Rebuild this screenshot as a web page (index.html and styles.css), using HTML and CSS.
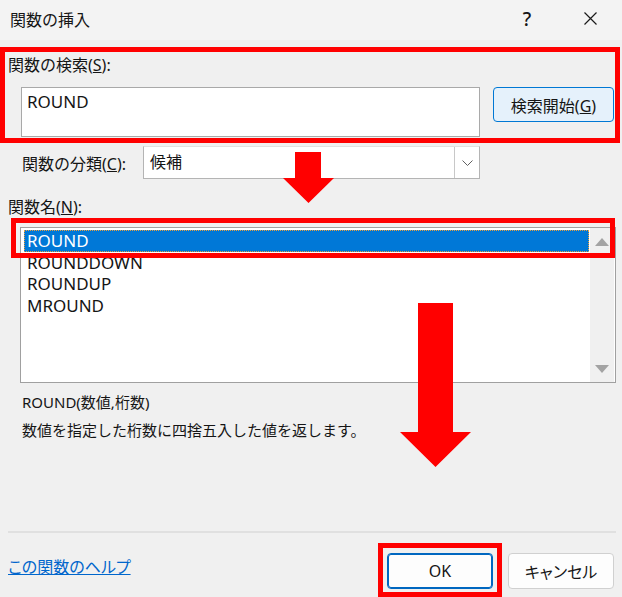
FILE: index.html
```html
<!DOCTYPE html>
<html lang="ja">

<head>
    <meta charset="UTF-8">
    <meta name="viewport" content="width=device-width, initial-scale=1.0">
    <title>関数の挿入</title>
    <link rel="stylesheet" href="styles.css">
</head>

<body>
    <div class="dialog">
        <div class="titlebar">
            <span class="title">関数の挿入</span>
            <span class="help">?</span>
            <span class="close">
                <svg width="13" height="13" viewBox="0 0 13 13">
                    <path d="M0.5 0.5 L12.5 12.5 M12.5 0.5 L0.5 12.5" stroke="#1a1a1a" stroke-width="1.2" fill="none" />
                </svg>
            </span>
        </div>

        <div class="content">
            <div class="search-label">関数の検索(<u>S</u>):</div>
            <div class="search-row">
                <div class="search-box">ROUND</div>
                <button class="btn btn-search">検索開始(<u>G</u>)</button>
            </div>

            <div class="category-row">
                <span class="category-label">関数の分類(<u>C</u>):</span>
                <div class="select">
                    <span class="select-value">候補</span>
                    <span class="select-arrow">
                        <svg width="11" height="6" viewBox="0 0 11 6">
                            <path d="M0.5 0.5 L5.5 5.5 L10.5 0.5" stroke="#606060" stroke-width="1" fill="none" />
                        </svg>
                    </span>
                </div>
            </div>

            <div class="name-label">関数名(<u>N</u>):</div>
            <div class="listbox">
                <ul class="items">
                    <li class="selected">ROUND</li>
                    <li>ROUNDDOWN</li>
                    <li>ROUNDUP</li>
                    <li>MROUND</li>
                </ul>
                <div class="scrollbar">
                    <span class="arrow-up"></span>
                    <span class="arrow-down"></span>
                </div>
            </div>

            <div class="desc">
                <div>ROUND(数値,桁数)</div>
                <div>数値を指定した桁数に四捨五入した値を返します。</div>
            </div>
        </div>

        <div class="separator"></div>
        <div class="footer">
            <a href="#" class="help-link">この関数のヘルプ</a>
            <div class="buttons">
                <button class="btn btn-ok">OK</button>
                <button class="btn btn-cancel">キャンセル</button>
            </div>
        </div>

        <!-- red annotations drawn over the dialog -->
        <span class="mark mark-search"></span>
        <span class="mark mark-row"></span>
        <span class="mark mark-ok"></span>
        <svg class="arrow arrow-small" width="51" height="51" viewBox="0 0 51 51">
            <polygon points="12,0 38,0 38,26 51,26 25.5,51 0,26 12,26" fill="#ff0000" />
        </svg>
        <svg class="arrow arrow-big" width="71" height="164" viewBox="0 0 71 164">
            <polygon points="18,0 53,0 53,129 71,129 35.5,164 0,129 18,129" fill="#ff0000" />
        </svg>
    </div>
</body>

</html>
```

FILE: styles.css
```css
* {
    box-sizing: border-box;
}

body {
    margin: 0;
    background: #f0f0f0;
    font-family: "Noto Sans", "Noto Sans CJK JP", sans-serif;
    color: #151515;
}

.dialog {
    position: relative;
    width: 622px;
    height: 597px;
    overflow: hidden;
    background: #f0f0f0;
    display: flex;
    flex-direction: column;
}

.titlebar {
    height: 40px;
    display: flex;
    align-items: center;
    padding: 0 0 3px 10px;
    background: #f3f3f3;
    font-size: 16px;
}

.titlebar .help {
    margin-left: auto;
    width: 20px;
    text-align: center;
    font-size: 19px;
    font-weight: 500;
}

.titlebar .close {
    display: flex;
    margin-left: 47px;
    margin-right: 25px;
}

.content {
    flex: 1;
    padding-top: 15px;
    font-size: 16px;
}

.search-label {
    padding-left: 8px;
    line-height: 20px;
}

.search-row {
    display: flex;
    align-items: flex-start;
    margin-top: 12px;
    padding-left: 21px;
}

.search-box {
    width: 459px;
    height: 50px;
    padding: 4px 5px;
    background: #fff;
    border: 1px solid #a9a9a9;
    font-size: 17px;
    line-height: 20px;
}

.btn {
    font-family: inherit;
    font-size: 16px;
    color: #151515;
    border-radius: 4px;
    padding: 0;
    cursor: pointer;
}

.btn-search {
    margin-left: 13px;
    width: 121px;
    height: 35px;
    background: #e5f1fb;
    border: 1px solid #0078d4;
}

.category-row {
    display: flex;
    align-items: center;
    margin-top: 9px;
    padding-left: 22px;
}

.category-label {
    width: 121px;
}

.select {
    display: flex;
    width: 337px;
    height: 33px;
    background: #fff;
    border: 1px solid #b4b4b4;
    border-top-color: #e0e0e0;
}

.select-value {
    flex: 1;
    padding-left: 6px;
    line-height: 31px;
}

.select-arrow {
    width: 25px;
    display: flex;
    align-items: center;
    justify-content: center;
    border-left: 1px solid #c8c8c8;
}

.name-label {
    margin-top: 18px;
    padding-left: 8px;
    line-height: 20px;
}

.listbox {
    display: flex;
    margin: 10px 0 0 20px;
    width: 596px;
    height: 156px;
    padding-right: 1px;
    background: #fff;
    border: 1px solid #a0a0a0;
}

.items {
    flex: 1;
    list-style: none;
    margin: 0 1px 0 0;
    padding: 2px 0 0 3px;
    font-size: 17px;
}

.items li {
    height: 21.5px;
    line-height: 20px;
    padding-left: 2px;
    border: 1px solid transparent;
}

.items li.selected {
    background: #0078d7;
    color: #fff;
    border: 1px dotted #e8a040;
}

.scrollbar {
    width: 24px;
    display: flex;
    flex-direction: column;
    justify-content: space-between;
    align-items: center;
    padding: 10px 0 9px;
    background: #f0f0f0;
}

.arrow-up,
.arrow-down {
    width: 0;
    height: 0;
    border-left: 7px solid transparent;
    border-right: 7px solid transparent;
}

.arrow-up {
    border-bottom: 8px solid #a3a3a3;
}

.arrow-down {
    border-top: 8px solid #a3a3a3;
}

.desc {
    margin-top: 5px;
    padding-left: 22px;
    font-size: 15px;
    line-height: 28px;
}

.separator {
    height: 2px;
    margin: 0 6px 0 8px;
    background: #e0e0e0;
}

.footer {
    height: 64px;
    display: flex;
    align-items: flex-start;
    padding: 0 8px;
}

.help-link {
    margin-top: 24px;
    font-size: 16px;
    line-height: 20px;
    color: #0066cc;
    font-feature-settings: "palt";
}

.buttons {
    display: flex;
    gap: 15px;
    margin-left: auto;
    margin-top: 20px;
}

.btn-ok,
.btn-cancel {
    width: 106px;
    height: 36px;
    background: #fdfdfd;
}

.btn-ok {
    border: 1px solid #0067c0;
    box-shadow: inset 0 0 0 1px #0067c0;
}

.btn-cancel {
    border: 1px solid #d0d0d0;
    font-feature-settings: "palt";
}

.mark {
    position: absolute;
    border: 5px solid #ff0000;
}

.mark-search {
    left: 0;
    top: 47px;
    width: 620px;
    height: 96px;
}

.mark-row {
    left: 11px;
    top: 218px;
    width: 604px;
    height: 40px;
}

.mark-ok {
    left: 378px;
    top: 543px;
    width: 124px;
    height: 54px;
}

.arrow {
    position: absolute;
}

.arrow-small {
    left: 283px;
    top: 152px;
}

.arrow-big {
    left: 400px;
    top: 303px;
}
```
